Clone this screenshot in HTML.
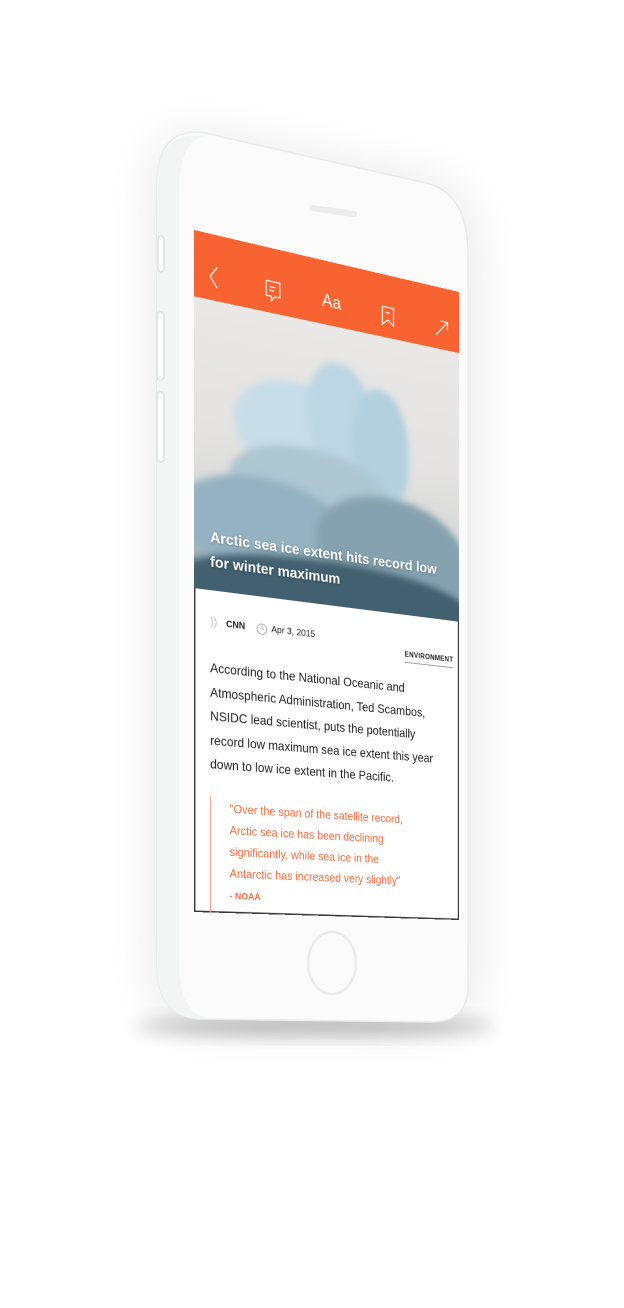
<!DOCTYPE html>
<html><head><meta charset="utf-8"><style>
html,body{margin:0;padding:0;background:#fff;}
body{width:624px;height:1308px;position:relative;overflow:hidden;font-family:"Liberation Sans",sans-serif;}
#bg{position:absolute;left:0;top:0;}
#scr{position:absolute;left:0;top:0;width:320px;height:720px;overflow:hidden;background:#fff;
transform-origin:0 0;transform:matrix3d(0.95147,0.27222,0,0.00026872, 0,0.94722,0,0, 0,0,1,0, 194,230,0,1);
box-shadow:inset 0 0 0 1.6px #3a3a3a;}
.hdr{position:absolute;left:0;top:0;width:320px;height:70px;background:#f96331;}
.img{position:absolute;left:0;top:70px;width:320px;height:308px;overflow:hidden;
background:linear-gradient(180deg,#e9e8e6 0%,#e4e3e1 45%,#d6d8d8 70%,#9fb2ba 88%,#3f5a68 100%);}
.b{position:absolute;border-radius:45% 55% 40% 60%;filter:blur(4px);}
.t{position:absolute;left:18px;top:240px;color:#fff;font-weight:bold;font-size:16px;line-height:26px;white-space:nowrap;text-shadow:0 1px 3px rgba(0,0,0,.3);}
.meta{position:absolute;top:407px;font-size:10px;color:#222;white-space:nowrap;}
.body{position:absolute;left:18px;top:448px;font-size:13.6px;line-height:25.5px;color:#1e1e1e;white-space:nowrap;}
.q{position:absolute;left:18px;top:596px;height:130px;border-left:1.5px solid #f7a285;}
.qt{position:absolute;left:40px;top:598px;font-size:12.6px;line-height:23px;color:#f4693a;white-space:nowrap;}
</style></head><body>
<svg id="bg" width="624" height="1308" viewBox="0 0 624 1308">
<defs>
<filter id="sh" x="-50%" y="-50%" width="200%" height="200%"><feGaussianBlur stdDeviation="28"/></filter>
<filter id="sh2" x="-50%" y="-50%" width="200%" height="200%"><feGaussianBlur stdDeviation="9"/></filter>
</defs>
<path d="M200 140 L440 190 Q470 200 470 260 L470 985 Q470 1022 430 1022 L200 1020 Q158 1018 158 965 L158 185 Q158 132 200 140 Z" fill="#000" opacity="0.10" filter="url(#sh)"/>
<ellipse cx="315" cy="1026" rx="180" ry="10" fill="#000" opacity="0.25" filter="url(#sh2)"/>
<path d="M205 133 L430 184 Q468 196 468 255 L468 985 Q468 1022 432 1022 L200 1019 Q157 1017 157 965 L157 185 Q157 126 205 133 Z" fill="#fbfbfb" stroke="#e9ecec" stroke-width="1.5"/>
<path d="M205 136 Q180 140 179 190 L179 960 Q179 1012 205 1017 L200 1019 Q157 1017 157 965 L157 185 Q157 130 205 136 Z" fill="#f3f5f5"/>
<rect x="158" y="236" width="6" height="36" rx="3" fill="#fff" stroke="#cfd4d4"/>
<rect x="157" y="312" width="7" height="68" rx="3" fill="#fff" stroke="#cfd4d4"/>
<rect x="157" y="392" width="7" height="70" rx="3" fill="#fff" stroke="#cfd4d4"/>
<path d="M312 208 L354 214" stroke="#ececec" stroke-width="6" stroke-linecap="round"/>
<ellipse cx="332" cy="963" rx="24" ry="31" fill="none" stroke="#ebebeb" stroke-width="2.5"/>
</svg>
<div id="scr">
 <div class="hdr">
  <svg width="320" height="70" style="position:absolute;left:0;top:0" fill="none" stroke="#fff" stroke-width="1.3">
   <path d="M26 34 L18 45 L26 56"/>
   <path d="M82 36 H98 V52 H92 L88 57 L88 52 H82 Z"/><path d="M86 42 H93 M86 46 H91"/>
   <path d="M222 36 H236 V56 L229 50 L222 56 Z"/><path d="M226 42 H231"/>
   <path d="M290 55 L304 39 M296 38 H305 V47"/>
  </svg>
  <div style="position:absolute;left:148px;top:34px;color:#fff;font-size:19px;font-weight:300;">Aa</div>
 </div>
 <div class="img">
  <div class="b" style="left:45px;top:70px;width:150px;height:110px;background:#c7dde8;"></div>
  <div class="b" style="left:130px;top:40px;width:80px;height:120px;background:#bcd6e3;"></div>
  <div class="b" style="left:185px;top:60px;width:70px;height:130px;background:#b3d0df;"></div>
  <div class="b" style="left:40px;top:140px;width:190px;height:90px;background:#aec6d2;"></div>
  <div class="b" style="left:-20px;top:180px;width:200px;height:110px;background:#94b2c1;"></div>
  <div class="b" style="left:140px;top:180px;width:190px;height:130px;background:#86a2b0;"></div>
  <div class="b" style="left:-10px;top:260px;width:340px;height:70px;background:#42606f;"></div>
  <div class="t">Arctic sea ice extent hits record low<br>for winter maximum</div>
 </div>
 <div class="meta" style="left:18px;color:#bbb;font-size:12px;top:404px;">))</div>
 <div class="meta" style="left:36px;font-weight:bold;">CNN</div>
 <svg style="position:absolute;left:70px;top:406px" width="14" height="14" fill="none" stroke="#aaa" stroke-width="1"><circle cx="7" cy="7" r="5.5"/><path d="M7 4 V7 H9.5"/></svg>
 <div class="meta" style="left:88px;">Apr 3, 2015</div>
 <div class="meta" style="left:250px;top:418px;font-size:8px;font-weight:bold;letter-spacing:.3px;border-bottom:1px solid #999;padding-bottom:4px;">ENVIRONMENT</div>
 <div class="body">According to the National Oceanic and<br>Atmospheric Administration, Ted Scambos,<br>NSIDC lead scientist, puts the potentially<br>record low maximum sea ice extent this year<br>down to low ice extent in the Pacific.</div>
 <div class="q"></div>
 <div class="qt">"Over the span of the satellite record,<br>Arctic sea ice has been declining<br>significantly, while sea ice in the<br>Antarctic has increased very slightly"<br><b style="font-size:10px;">- NOAA</b></div>
</div>
</body></html>
